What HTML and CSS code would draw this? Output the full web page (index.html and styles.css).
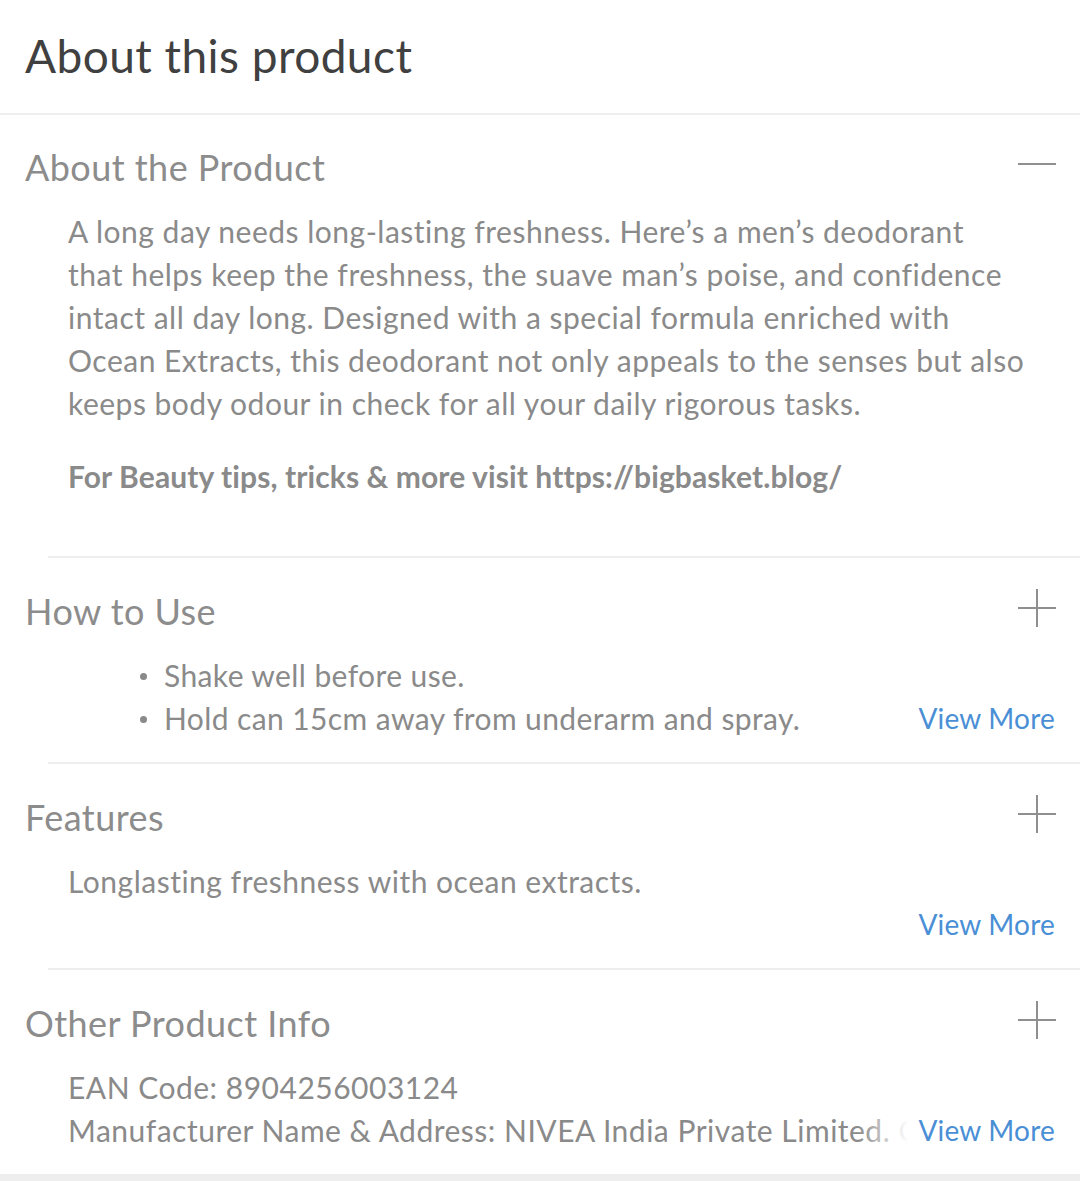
FILE: index.html
```html
<!DOCTYPE html>
<html lang="en">
<head>
<meta charset="utf-8">
<title>About this product</title>
<link rel="stylesheet" href="styles.css">
</head>
<body>
<div class="page">
  <header class="page-head">
    <h1 class="page-title">About this product</h1>
  </header>

  <section class="acc acc-first">
    <div class="acc-head">
      <h2 class="acc-title">About the Product</h2>
      <svg class="acc-icon" viewBox="0 0 40 40" aria-hidden="true"><path d="M1 20H39"/></svg>
    </div>
    <div class="acc-body">
      <p class="desc">A long day needs long-lasting freshness. Here’s a men’s deodorant<br>that helps keep the freshness, the suave man’s poise, and confidence<br>intact all day long. Designed with a special formula enriched with<br>Ocean Extracts, this deodorant not only appeals to the senses but also<br>keeps body odour in check for all your daily rigorous tasks.</p>
      <p class="desc desc-bold">For Beauty tips, tricks &amp; more visit https://bigbasket.blog/</p>
    </div>
  </section>

  <section class="acc">
    <div class="acc-head">
      <h2 class="acc-title">How to Use</h2>
      <svg class="acc-icon" viewBox="0 0 40 40" aria-hidden="true"><path d="M1 20H39M20 1V39"/></svg>
    </div>
    <div class="acc-body clamp">
      <ul class="bullets">
        <li>Shake well before use.</li>
        <li>Hold can 15cm away from underarm and spray.</li>
      </ul>
      <span class="more">View More</span>
    </div>
  </section>

  <section class="acc">
    <div class="acc-head">
      <h2 class="acc-title">Features</h2>
      <svg class="acc-icon" viewBox="0 0 40 40" aria-hidden="true"><path d="M1 20H39M20 1V39"/></svg>
    </div>
    <div class="acc-body clamp">
      <p class="desc">Longlasting freshness with ocean extracts.</p>
      <span class="more">View More</span>
    </div>
  </section>

  <section class="acc">
    <div class="acc-head">
      <h2 class="acc-title">Other Product Info</h2>
      <svg class="acc-icon" viewBox="0 0 40 40" aria-hidden="true"><path d="M1 20H39M20 1V39"/></svg>
    </div>
    <div class="acc-body clamp">
      <p class="desc nowrap">EAN Code: 8904256003124</p>
      <p class="desc nowrap">Manufacturer Name &amp; Address: NIVEA India Private Limited. C</p>
      <span class="more">View More</span>
    </div>
  </section>

  <div class="bottom-bar"></div>
</div>
</body>
</html>
```

FILE: styles.css
```css
* { box-sizing: border-box; }

html, body {
  margin: 0;
  padding: 0;
  background: #ffffff;
}

body {
  font-family: Lato, "Open Sans", Arial, sans-serif;
  color: #8a8a8a;
}

.page {
  width: 1080px;
  min-height: 1181px;
  display: flex;
  flex-direction: column;
}

.page-head {
  height: 115px;
  border-bottom: 2px solid #eeeeee;
  padding: 0 25px;
  display: flex;
  align-items: center;
}

.page-title {
  margin: 0;
  font-size: 46px;
  font-weight: 400;
  letter-spacing: 0.45px;
  color: #404040;
  line-height: 56px;
  padding-bottom: 2px;
}

.acc {
  position: relative;
  padding: 0 25px 22px 25px;
}

.acc-first { padding-bottom: 21px; }

.acc + .acc::before {
  content: "";
  display: block;
  height: 2px;
  background: #eeeeee;
  margin: 0 -25px 0 23px;
}

.acc-head {
  display: flex;
  align-items: center;
  justify-content: space-between;
  padding-top: 31px;
  height: 75px;
}

.acc-first .acc-head { padding-top: 30px; height: 74px; }

.acc-title {
  margin: 0;
  font-size: 36px;
  font-weight: 400;
  letter-spacing: 0.45px;
  color: #8c8c8c;
  line-height: 44px;
}

.acc-icon {
  width: 40px;
  height: 40px;
  margin-right: -2px;
  margin-top: -6px;
  fill: none;
  stroke: #8f8f8f;
  stroke-width: 2;
}

.acc-first .acc-icon { margin-top: -7px; }

.acc-body {
  position: relative;
  margin-top: 21px;
  padding-left: 43px;
}

.desc {
  margin: 0;
  font-size: 30px;
  letter-spacing: 0.5px;
  line-height: 43px;
  color: #8a8a8a;
  white-space: nowrap;
}

.desc-bold {
  font-weight: 700;
  letter-spacing: 0.1px;
  margin-top: 30px;
  margin-bottom: 37px;
}

.nowrap {
  overflow: hidden;
}

.clamp {
  height: 86px;
  overflow: hidden;
}

.bullets {
  margin: 0;
  padding: 0 0 0 96px;
  list-style: none;
}

.bullets li {
  position: relative;
  font-size: 30px;
  letter-spacing: 0.4px;
  line-height: 43px;
  color: #8a8a8a;
}

.bullets li::before {
  content: "";
  position: absolute;
  left: -24px;
  top: 19px;
  width: 7px;
  height: 7px;
  border-radius: 50%;
  background: #8a8a8a;
}

.more {
  position: absolute;
  right: 0;
  bottom: 0;
  line-height: 43px;
  font-size: 28px;
  letter-spacing: 0.2px;
  color: #4a8fd6;
  padding-left: 60px;
  background: linear-gradient(to right, rgba(255,255,255,0) 0, #ffffff 50px);
}

.bottom-bar {
  margin-top: auto;
  height: 7px;
  background: #eeeeee;
}
```
